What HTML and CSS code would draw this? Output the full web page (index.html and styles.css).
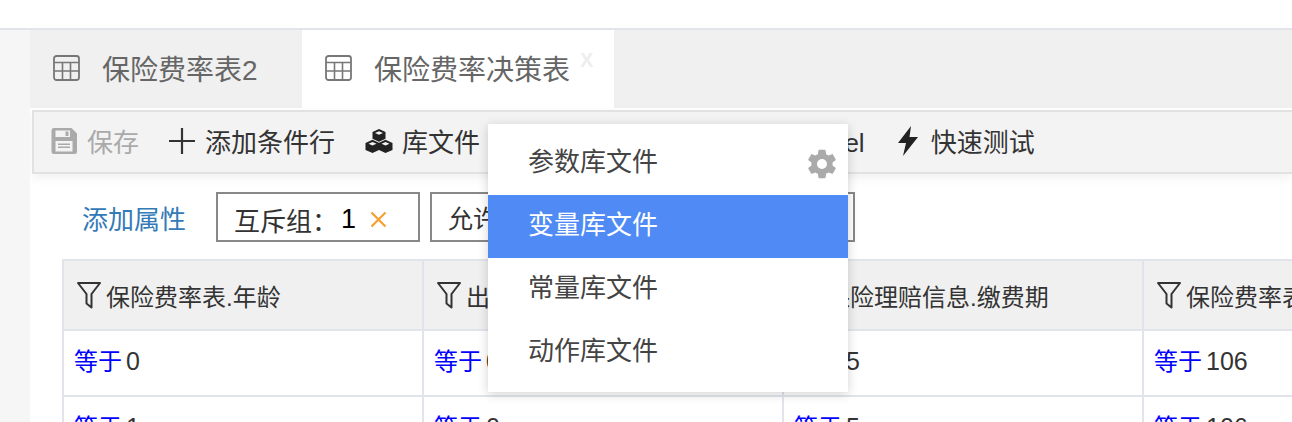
FILE: index.html
```html
<!DOCTYPE html>
<html>
<head>
	<meta charset='utf-8'>
	<title>保险费率决策表</title>
	<link rel="stylesheet" href="styles.css">
</head>

<body>
	<svg class="defs" width="0" height="0">
		<symbol id="i-table" viewBox="0 0 27 26">
			<rect x="1" y="1" width="25" height="24" rx="2.500" fill="none" stroke="currentColor" stroke-width="1.800"/>
			<path d="M1 7.500H26M1 16H26M9.500 7.500V25M17.500 7.500V25" fill="none" stroke="currentColor" stroke-width="1.600"/>
		</symbol>
		<symbol id="i-filter" viewBox="0 0 26 28">
			<path d="M2 2H24L15.500 13V26.500L10.500 22.500V13Z" fill="none" stroke="currentColor" stroke-width="2" stroke-linejoin="round"/>
		</symbol>
	</svg>

	<div class="topbar"></div>
	<div class="page">
		<div class="side"></div>
		<div class="main">
			<div class="tabs">
				<div class="tab">
					<svg class="tab-icon"><use href="#i-table"/></svg>
					保险费率表2
				</div>
				<div class="tab active">
					<svg class="tab-icon"><use href="#i-table"/></svg>
					保险费率决策表
					<span class="tab-close">X</span>
				</div>
			</div>

			<div class="toolbar">
				<span class="tool disabled">
					<svg class="ico-save" viewBox="0 0 26 28"><path fill="currentColor" fill-rule="evenodd" d="M3 1H20.500L26 6.500V24.500a2.500 2.500 0 0 1-2.500 2.500H3a2.500 2.500 0 0 1-2.500-2.500V3.500A2.500 2.500 0 0 1 3 1ZM4.500 3.500V10H19V3.500ZM14.500 4.500H17.500V9H14.500ZM4.500 14V24.500H21.500V14ZM7 16.500H19V18H7ZM7 19.500H19V21H7Z"/></svg>
					保存
				</span>
				<span class="tool">
					<svg class="ico-plus" viewBox="0 0 26 26"><path d="M13 0V26M0 13H26" stroke="currentColor" stroke-width="2.200"/></svg>
					添加条件行
				</span>
				<span class="tool">
					<svg class="ico-cubes" viewBox="0 0 28 24"><path fill="currentColor" fill-rule="evenodd" d="M14 0L20.500 3V9.800L14 12.800L7.500 9.800V3ZM14 2.200L10 4L14 5.800L18 4ZM7.500 10.800L14 13.800L20.500 10.800L27.500 14V21L20.500 24L14 21L7.500 24L.500 21V14ZM7.500 13L3.500 14.800L7.500 16.600L11.500 14.800ZM20.500 13L16.500 14.800L20.500 16.600L24.500 14.800Z"/></svg>
					库文件
				</span>
				<span class="tool tool-excel">导入Excel</span>
				<span class="tool">
					<svg class="ico-bolt" viewBox="0 0 22 30"><path fill="currentColor" d="M14 0L1 17H9L6 30L21 11H12.500Z"/></svg>
					快速测试
				</span>
			</div>

			<div class="attrs">
				<a class="attr-add">添加属性</a>
				<div class="chip chip-group">互斥组：<b>1</b>
					<svg class="chip-x" viewBox="0 0 17 17"><path d="M1.500 1.500L15.500 15.500M15.500 1.500L1.500 15.500" stroke="currentColor" stroke-width="2.200"/></svg>
				</div>
				<div class="chip chip-wide">允许循环触发</div>
			</div>

			<table class="grid">
				<thead>
					<tr>
						<th><svg class="ico-filter"><use href="#i-filter"/></svg>保险费率表.年龄</th>
						<th><svg class="ico-filter"><use href="#i-filter"/></svg>出险理赔信息.年龄</th>
						<th><svg class="ico-filter"><use href="#i-filter"/></svg>保险理赔信息.缴费期</th>
						<th><svg class="ico-filter"><use href="#i-filter"/></svg>保险费率表.保险期间</th>
					</tr>
				</thead>
				<tbody>
					<tr>
						<td><em>等于</em>0</td>
						<td><em>等于</em>0</td>
						<td><em>等于</em>5</td>
						<td><em>等于</em>106</td>
					</tr>
					<tr>
						<td><em>等于</em>1</td>
						<td><em>等于</em>0</td>
						<td><em>等于</em>5</td>
						<td><em>等于</em>106</td>
					</tr>
				</tbody>
			</table>
		</div>
	</div>

	<ul class="menu">
		<li>参数库文件</li>
		<li class="current">变量库文件</li>
		<li>常量库文件</li>
		<li>动作库文件</li>
		<svg class="ico-gear" viewBox="0 0 24 24"><path fill="currentColor" d="M19.430 12.980c.04-.32.070-.64.070-.98s-.03-.66-.07-.98l2.110-1.650c.19-.15.240-.42.120-.64l-2-3.460c-.12-.22-.39-.30-.61-.22l-2.490 1c-.52-.40-1.080-.73-1.690-.98l-.38-2.650C14.460 2.180 14.250 2 14 2h-4c-.25 0-.46.180-.49.420l-.38 2.650c-.61.250-1.170.590-1.690.98l-2.490-1c-.23-.09-.49 0-.61.220l-2 3.460c-.13.220-.07.490.12.640l2.110 1.650c-.04.320-.07.650-.07.980s.03.660.07.980l-2.110 1.650c-.19.150-.24.420-.12.640l2 3.460c.12.220.39.300.61.220l2.490-1c.52.400 1.080.730 1.690.980l.38 2.650c.03.240.24.420.49.420h4c.25 0 .46-.18.49-.42l.38-2.650c.61-.25 1.170-.59 1.690-.98l2.490 1c.23.090.49 0 .61-.22l2-3.460c.12-.22.070-.49-.12-.64l-2.110-1.650zM12 15.500c-1.930 0-3.500-1.570-3.500-3.500s1.570-3.500 3.500-3.500 3.500 1.570 3.500 3.500-1.570 3.500-3.500 3.500z"/></svg>
	</ul>
</body>
</html>
```

FILE: styles.css
```css
html, body {
	margin: 0;
	height: 422px;
	overflow: hidden;
	background: #fff;
	font-family: "Liberation Sans", "Noto Sans CJK SC", sans-serif;
	color: #333;
}
.defs {position: absolute;}

.topbar {
	height: 28px;
	border-bottom: 2px solid #e1e5eb;
}
.page {display: flex;}
.side {
	flex: 0 0 30px;
	height: 392px;
	background: #f6f6f6;
}
.main {
	flex: 1;
	min-width: 0;
	height: 392px;
	overflow: hidden;
}

/* tabs */
.tabs {
	display: flex;
	height: 78px;
	background: #f0f0f0;
}
.tab {
	display: flex;
	align-items: center;
	width: 272px;
	padding: 0 0 3px 23px;
	box-sizing: border-box;
	font-size: 28px;
	color: #666;
}
.tab.active {
	position: relative;
	width: 312px;
	background: #fff;
}
.tab-icon {
	width: 27px;
	height: 26px;
	margin-right: 22px;
	color: #777;
}
.tab-close {
	position: absolute;
	left: 278px;
	top: 19px;
	font-size: 20px;
	font-weight: bold;
	color: #eee;
}

/* toolbar */
.toolbar {
	display: flex;
	align-items: center;
	height: 57px;
	margin: 2px 0 0 2px;
	padding: 0 0 3px 17px;
	background: #f3f3f3;
	border: 2px solid #e2e2e2;
	border-right: 0;
	box-shadow: 0 4px 10px rgba(0,0,0,.06);
	font-size: 26px;
	color: #333;
}
.tool {
	display: flex;
	align-items: center;
	white-space: nowrap;
	margin-right: 30px;
}
.tool.disabled {color: #aaa;}
.tool-excel {margin: 0 32px 0 239px;}
.ico-save {width: 26px; height: 28px; margin-right: 10px;}
.ico-plus {width: 26px; height: 26px; margin-right: 10px;}
.ico-cubes {width: 28px; height: 24px; margin-right: 9px; color: #222;}
.ico-bolt {width: 22px; height: 30px; margin-right: 12px; color: #222;}

/* attrs */
.attrs {
	display: flex;
	align-items: center;
	height: 86px;
	padding-left: 52px;
	font-size: 26px;
}
.attr-add {
	margin-right: 30px;
	color: #337ab7;
}
.chip {
	display: flex;
	align-items: center;
	box-sizing: border-box;
	height: 50px;
	width: 204px;
	margin-right: 10px;
	padding-left: 16px;
	border: 2px solid #888;
	color: #333;
	font-size: 25px;
}
.chip-group {padding-top: 4px; font-size: 26px;}
.chip b {font-weight: normal; font-size: 27px; color: #000; margin-left: 3px;}
.chip-x {width: 17px; height: 17px; margin-left: 14px; color: #f5a030;}
.chip-wide {width: 425px;}

/* grid */
.grid {
	table-layout: fixed;
	width: 1442px;
	margin: -1px 0 0 32px;
	border-collapse: collapse;
	font-size: 24px;
}
.grid th, .grid td {
	border: 2px solid #e1e5eb;
	text-align: left;
	white-space: nowrap;
	overflow: hidden;
	font-weight: normal;
}
.grid th {
	height: 68px;
	padding: 0 0 0 12px;
	background: #f0f0f0;
	color: #333;
}
.grid td {
	height: 66px;
	padding: 0 0 8px 10px;
	box-sizing: border-box;
	font-size: 25px;
	color: #333;
}
.grid em {font-size: 24px; font-style: normal; color: #00f; margin-right: 4px;}
.ico-filter {
	width: 26px;
	height: 28px;
	margin-right: 4px;
	vertical-align: -3px;
	color: #333;
}

/* dropdown */
.menu {
	position: absolute;
	left: 488px;
	top: 124px;
	width: 360px;
	margin: 0;
	padding: 8px 0;
	list-style: none;
	background: #fff;
	box-shadow: 0 2px 10px rgba(0,0,0,.18);
	font-size: 26px;
	color: #444;
}
.menu li {
	height: 63px;
	line-height: 60px;
	padding-left: 40px;
}
.menu li.current {
	background: #4f8af5;
	color: #fff;
}
.ico-gear {
	position: absolute;
	left: 317px;
	top: 23px;
	width: 34px;
	height: 34px;
	color: #aaa;
}
```
